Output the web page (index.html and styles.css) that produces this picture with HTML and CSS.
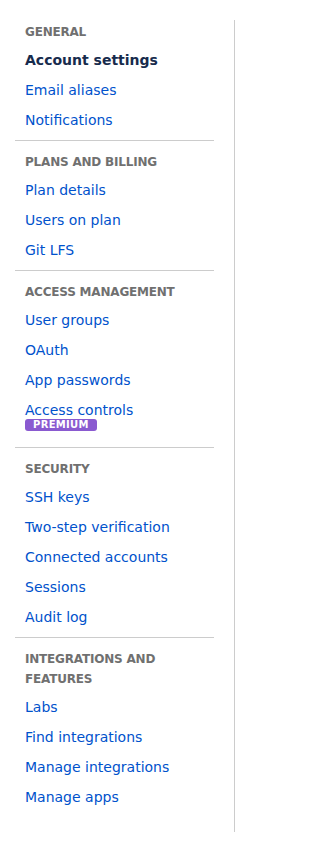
FILE: index.html
```html
<!DOCTYPE html>
<html lang="en">
<head>
<meta charset="utf-8">
<title>Settings</title>
<link rel="stylesheet" href="styles.css">
</head>
<body>
<nav class="sidebar">
  <section class="group">
    <h2 class="group-title">General</h2>
    <ul class="links">
      <li><a class="link active" href="#">Account settings</a></li>
      <li><a class="link" href="#">Email aliases</a></li>
      <li><a class="link" href="#">Notifications</a></li>
    </ul>
  </section>
  <section class="group">
    <h2 class="group-title">Plans and billing</h2>
    <ul class="links">
      <li><a class="link" href="#">Plan details</a></li>
      <li><a class="link" href="#">Users on plan</a></li>
      <li><a class="link" href="#">Git LFS</a></li>
    </ul>
  </section>
  <section class="group">
    <h2 class="group-title">Access management</h2>
    <ul class="links">
      <li><a class="link" href="#">User groups</a></li>
      <li><a class="link" href="#">OAuth</a></li>
      <li><a class="link" href="#">App passwords</a></li>
      <li class="with-badge"><a class="link" href="#">Access controls</a><span class="badge">Premium</span></li>
    </ul>
  </section>
  <section class="group">
    <h2 class="group-title">Security</h2>
    <ul class="links">
      <li><a class="link" href="#">SSH keys</a></li>
      <li><a class="link" href="#">Two-step verification</a></li>
      <li><a class="link" href="#">Connected accounts</a></li>
      <li><a class="link" href="#">Sessions</a></li>
      <li><a class="link" href="#">Audit log</a></li>
    </ul>
  </section>
  <section class="group">
    <h2 class="group-title">Integrations and features</h2>
    <ul class="links">
      <li><a class="link" href="#">Labs</a></li>
      <li><a class="link" href="#">Find integrations</a></li>
      <li><a class="link" href="#">Manage integrations</a></li>
      <li><a class="link" href="#">Manage apps</a></li>
    </ul>
  </section>
</nav>
</body>
</html>
```

FILE: styles.css
```css
html, body {
  margin: 0;
  padding: 0;
  background: #ffffff;
}

body {
  font-family: "DejaVu Sans", "Liberation Sans", sans-serif;
  font-size: 14px;
  line-height: 20px;
  color: #172b4d;
  padding-top: 20px;
}

.sidebar {
  box-sizing: border-box;
  width: 235px;
  padding: 2px 20px 15px 15px;
  border-right: 1px solid #cccccc;
}

.group {
  border-top: 1px solid #cccccc;
  padding-top: 11px;
}

.group:first-child {
  border-top: none;
  padding-top: 0;
}

.group-title {
  margin: 0 0 3px;
  padding-left: 10px;
  font-size: 12px;
  line-height: 20px;
  font-weight: bold;
  letter-spacing: -0.2px;
  text-transform: uppercase;
  color: #707070;
}

.links {
  list-style: none;
  margin: 0 0 5px;
  padding: 0;
}

.links li {
  padding: 5px 0 5px 10px;
}

.links li.with-badge {
  display: flex;
  flex-direction: column;
  align-items: flex-start;
}

.link {
  display: block;
  color: #0052cc;
  text-decoration: none;
}

.link.active {
  color: #172b4d;
  font-weight: bold;
}

.badge {
  display: block;
  margin-top: -1px;
  margin-bottom: 6px;
  padding: 0 8px;
  height: 12px;
  line-height: 12px;
  border-radius: 3px;
  background: #8a5ad0;
  color: #ffffff;
  font-size: 10px;
  font-weight: bold;
  letter-spacing: 0.3px;
  text-transform: uppercase;
}
```
